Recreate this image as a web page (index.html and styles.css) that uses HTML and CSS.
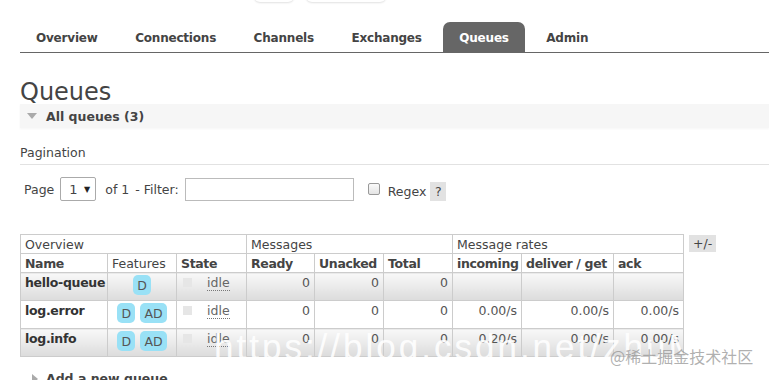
FILE: index.html
```html
<!DOCTYPE html>
<html>
<head>
<meta charset="utf-8">
<link rel="stylesheet" href="styles.css">
</head>
<body>
<div class="top">
  <span class="ghost g1"></span>
  <span class="ghost g2"></span>
</div>
<nav class="tabs">
  <a class="tab">Overview</a>
  <a class="tab">Connections</a>
  <a class="tab">Channels</a>
  <a class="tab">Exchanges</a>
  <a class="tab active">Queues</a>
  <a class="tab">Admin</a>
</nav>
<main class="main">
  <h1 class="title">Queues</h1>
  <div class="section-head"><span class="tri-down"></span>All queues (3)</div>
  <div class="pag-label">Pagination</div>
  <div class="controls">
    <span>Page</span>
    <span class="select">1 <span class="caret">▼</span></span>
    <span class="of">of 1</span>
    <span>- Filter:</span>
    <span class="filter"></span>
    <span class="check"></span>
    <span class="regex">Regex</span>
    <span class="help">?</span>
  </div>
  <div class="table-wrap">
    <table class="list">
      <colgroup>
        <col class="w87"><col class="w69"><col class="w70"><col class="w68"><col class="w69"><col class="w69"><col class="w69"><col class="w92"><col class="w70">
      </colgroup>
      <tr class="grp">
        <th colspan="3">Overview</th>
        <th colspan="3">Messages</th>
        <th colspan="3">Message rates</th>
      </tr>
      <tr class="cols">
        <th class="b">Name</th>
        <th>Features</th>
        <th class="b">State</th>
        <th class="b">Ready</th>
        <th class="b">Unacked</th>
        <th class="b">Total</th>
        <th class="b">incoming</th>
        <th class="b">deliver / get</th>
        <th class="b">ack</th>
      </tr>
      <tr class="odd">
        <td class="name">hello-queue</td>
        <td class="feat"><span class="badge">D</span></td>
        <td class="state"><span class="sq"></span><span class="idle">idle</span></td>
        <td class="num">0</td>
        <td class="num">0</td>
        <td class="num">0</td>
        <td class="num"></td>
        <td class="num"></td>
        <td class="num"></td>
      </tr>
      <tr class="even">
        <td class="name">log.error</td>
        <td class="feat"><span class="badge">D</span><span class="badge">AD</span></td>
        <td class="state"><span class="sq"></span><span class="idle">idle</span></td>
        <td class="num">0</td>
        <td class="num">0</td>
        <td class="num">0</td>
        <td class="num">0.00/s</td>
        <td class="num">0.00/s</td>
        <td class="num">0.00/s</td>
      </tr>
      <tr class="odd">
        <td class="name">log.info</td>
        <td class="feat"><span class="badge">D</span><span class="badge">AD</span></td>
        <td class="state"><span class="sq"></span><span class="idle">idle</span></td>
        <td class="num">0</td>
        <td class="num">0</td>
        <td class="num">0</td>
        <td class="num">0.20/s</td>
        <td class="num">0.00/s</td>
        <td class="num">0.00/s</td>
      </tr>
    </table>
    <span class="plusminus">+/-</span>
  </div>
  <div class="add"><span class="tri-right"></span>Add a new queue</div>
</main>
<div class="wm">https://blog.csdn.net/zhuM</div>
<div class="wm2">@稀土掘金技术社区</div>
</body>
</html>
```

FILE: styles.css
```css
* { box-sizing: border-box; }
html, body { margin: 0; padding: 0; background: #fff; }
body {
  font-family: "DejaVu Sans", Verdana, sans-serif;
  font-size: 12.5px;
  color: #444;
  width: 769px;
  height: 380px;
  overflow: hidden;
  position: relative;
}
.top { height: 22px; position: relative; }
.ghost {
  position: absolute; top: -6px; height: 8px;
  border-radius: 0 0 6px 6px;
  box-shadow: 0 1px 2px rgba(0,0,0,0.12);
  background: #fff;
}
.g1 { left: 254px; width: 40px; }
.g2 { left: 306px; width: 80px; }

.tabs {
  display: flex;
  margin-left: 20px;
  border-bottom: 1px solid #666;
  height: 31px;
  gap: 5.5px;
}
.tab {
  display: block;
  padding: 1px 16px 0;
  line-height: 30px;
  font-weight: bold;
  font-size: 12px;
  letter-spacing: -0.2px;
  color: #444;
  border-radius: 7px 7px 0 0;
}
.tab.active { background: #666; color: #fff; }

.main { padding-left: 20px; }
.title {
  margin: 25px 0 0;
  font-size: 24px;
  line-height: 28px;
  font-weight: normal;
  color: #444;
}
.section-head {
  display: flex;
  align-items: center;
  height: 24px;
  margin-top: -2px;
  background: #f6f6f6;
  box-shadow: 0 1px 2px rgba(0,0,0,0.04);
  font-weight: bold;
  color: #444;
  padding-left: 7px;
}
.tri-down {
  width: 0; height: 0;
  border-left: 5px solid transparent;
  border-right: 5px solid transparent;
  border-top: 6px solid #aaa;
  margin-right: 9px;
}
.pag-label {
  margin-top: 16px;
  line-height: 18px;
  padding-bottom: 2px;
  border-bottom: 1px solid #e2e2e2;
  color: #444;
}
.controls {
  display: flex;
  align-items: center;
  margin-top: 12px;
  padding-left: 4px;
  height: 24px;
  color: #444;
}
.select {
  display: inline-flex;
  align-items: center;
  justify-content: space-between;
  width: 36px; height: 24px;
  margin-left: 6px;
  padding: 0 5px 0 8px;
  border: 1px solid #aaa;
  border-radius: 2px;
  font-size: 13px;
}
.caret { font-size: 8px; color: #222; }
.of { margin-left: 9px; margin-right: 6px; }
.filter {
  width: 169px; height: 23px;
  margin-left: 6px;
  border: 1px solid #bbb;
}
.check {
  width: 12px; height: 12px;
  margin-left: 14px;
  border: 1px solid #999;
  border-radius: 2px;
  background: linear-gradient(#fafafa, #e4e4e4);
}
.regex { margin-left: 8px; position: relative; top: 2px; }
.help {
  margin-left: 4px;
  width: 16px; height: 19px;
  background: #e2e2e2;
  text-align: center;
  line-height: 19px;
  position: relative; top: 2px;
}

.table-wrap {
  display: flex;
  align-items: flex-start;
  margin-top: 33px;
}
.list {
  border-collapse: collapse;
  table-layout: fixed;
  width: 663px;
  color: #444;
}
.w87 { width: 87px; }
.w69 { width: 69px; }
.w70 { width: 70px; }
.w68 { width: 68px; }
.w92 { width: 92px; }
.list th, .list td {
  border: 1px solid #ccc;
  padding: 0 4px;
  white-space: nowrap;
  overflow: visible;
}
.list th { text-align: left; font-weight: normal; height: 19px; line-height: 17px; background: #fff; }
.list th.b { font-weight: bold; letter-spacing: -0.35px; }
.list td { height: 28px; vertical-align: top; padding-top: 2px; }
.odd td { background: linear-gradient(#f8f8f8, #dcdcdc); }
.even td { background: #fff; }
.name { font-weight: bold; color: #333; letter-spacing: -0.3px; }
.num { text-align: right; color: #555; }
.list td.feat { text-align: center; padding: 2px 0 0; }
.badge {
  display: inline-block;
  background: #99e1f6;
  color: #555;
  border-radius: 5px;
  height: 20px;
  line-height: 21px;
  padding: 0 4px;
  min-width: 18px;
  margin: 0 2.5px;
  text-align: center;
}
.list td.state { padding-left: 6px; }
.sq {
  display: inline-block;
  width: 9px; height: 9px;
  background: #e6e6e6;
  margin-top: 3px;
  vertical-align: top;
}
.idle {
  margin-left: 15px;
  color: #666;
  border-bottom: 1px dotted #777;
}
.plusminus {
  margin-left: 5px;
  margin-top: 1px;
  background: #e2e2e2;
  height: 17px;
  line-height: 17px;
  padding: 0 4px;
  color: #444;
}
.add {
  display: flex;
  align-items: center;
  margin-top: 14px;
  padding-left: 12px;
  font-weight: bold;
  color: #444;
}
.tri-right {
  width: 0; height: 0;
  border-top: 5px solid transparent;
  border-bottom: 5px solid transparent;
  border-left: 6px solid #aaa;
  margin-right: 8px;
}
.wm {
  position: absolute;
  left: 214px; top: 327px;
  font-family: "Liberation Sans", Arial, sans-serif;
  font-size: 35px;
  color: rgba(255,255,255,0.9);
  white-space: nowrap;
  letter-spacing: 3px;
}
.wm2 {
  position: absolute;
  left: 610px; top: 346px;
  font-family: "Noto Sans CJK SC", sans-serif;
  font-size: 16px;
  line-height: 20px;
  color: rgba(150,150,150,0.75);
  white-space: nowrap;
}
```
